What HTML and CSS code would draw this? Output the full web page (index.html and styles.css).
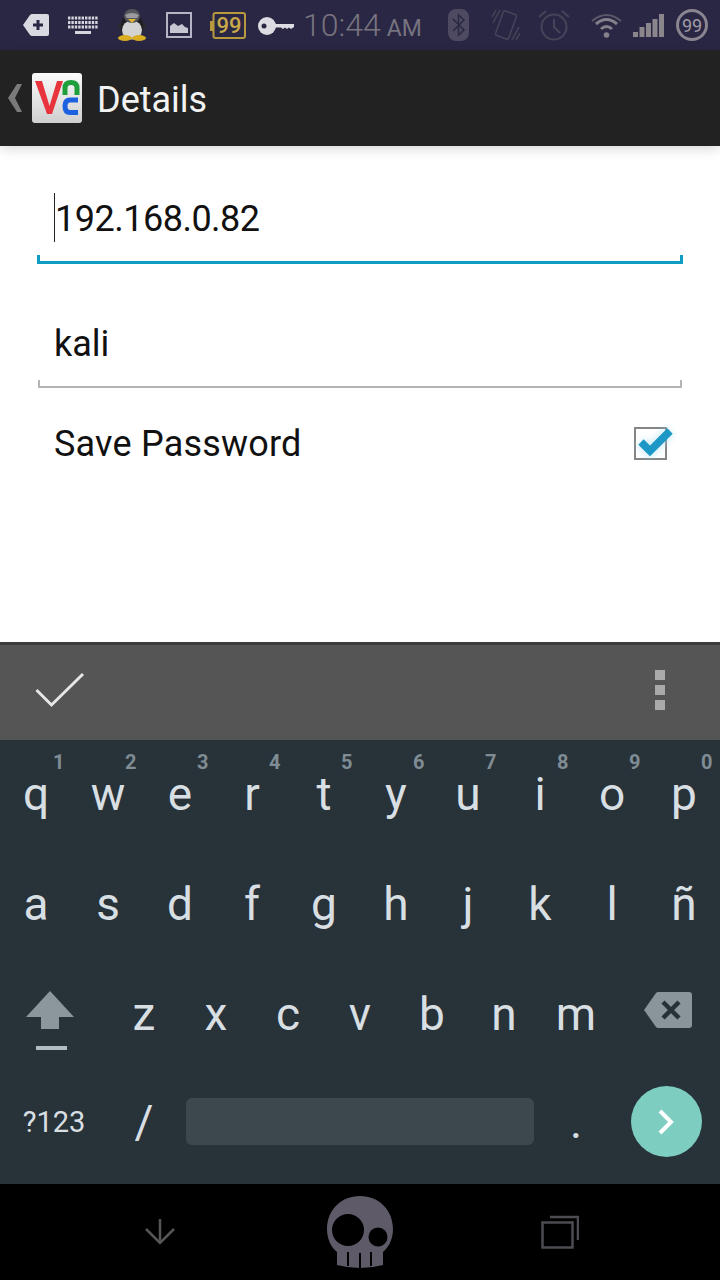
FILE: index.html
```html
<!DOCTYPE html>
<html lang="en">
<head>
    <meta charset="UTF-8">
    <meta name="viewport" content="width=device-width, initial-scale=1.0">
    <title>Details</title>
    <link rel="stylesheet" href="styles.css">
</head>
<body>
    <div class="screen">
        <!-- Status bar -->
        <div class="status-bar">
            <div class="status-left">
                <svg class="ic-tag" width="26" height="22" viewBox="0 0 26 22"><path d="M0 11 L7 1 Q8 0 9 0 H24 Q26 0 26 2 V20 Q26 22 24 22 H9 Q8 22 7 21 Z" fill="#d9d9e2"/><path d="M15 6 V16 M10 11 H20" stroke="#2a2744" stroke-width="3"/></svg>
                <svg class="ic-keys" width="30" height="20" viewBox="0 0 30 20"><g stroke="#d5d5dd" stroke-width="3" stroke-dasharray="2.4 1"><path d="M0 3 H30"/><path d="M0 7.5 H30"/><path d="M0 12 H30"/></g><path d="M7 17.5 H23" stroke="#d5d5dd" stroke-width="3"/></svg>
                <svg class="ic-penguin" width="30" height="32" viewBox="0 0 30 32"><path d="M6 24 L0 17 L7 12 Z M24 24 L30 17 L23 12 Z" fill="#2a2a30"/><ellipse cx="15" cy="17" rx="11" ry="13" fill="#1d1d22"/><ellipse cx="15" cy="21" rx="10" ry="9.5" fill="#d3d3d3"/><ellipse cx="15" cy="7" rx="8" ry="7" fill="#55555c"/><path d="M8 6 Q15 2 22 6 L20 9 H10 Z" fill="#9a9aa0"/><path d="M11 10 H19 L15 14 Z" fill="#e0b630"/><ellipse cx="8" cy="29" rx="7" ry="3" fill="#d9ae22"/><ellipse cx="22" cy="29" rx="7" ry="3" fill="#d9ae22"/></svg>
                <svg class="ic-image" width="26" height="26" viewBox="0 0 26 26"><rect x="1" y="1" width="24" height="24" fill="none" stroke="#b4b4c4" stroke-width="2"/><path d="M4 21 V14 L8 11 L12 14 L16 12 L19 15 L22 16 V21 Z" fill="#c6c6d0"/></svg>
                <svg class="ic-battery" width="36" height="27" viewBox="0 0 36 27"><rect x="0" y="9" width="3" height="10" fill="#b89a3e"/><rect x="3.500" y="1" width="31.500" height="25" rx="2" fill="none" stroke="#b89a3e" stroke-width="2"/><text x="19" y="21" text-anchor="middle" class="battery-text">99</text></svg>
                <svg class="ic-key" width="36" height="18" viewBox="0 0 36 18"><circle cx="9" cy="9" r="9" fill="#dcdce2"/><circle cx="6" cy="9" r="2.500" fill="#2a2744"/><path d="M16 7 H36 V10 L33 12 L31 10.500 L29 12 L27 10.500 L25 12 L23 10.500 H16 Z" fill="#dcdce2"/></svg>
                <div class="clock">10:44<span class="clock-ampm">AM</span></div>
            </div>
            <div class="status-right">
                <svg class="ic-bt" width="21" height="32" viewBox="0 0 21 32"><rect width="21" height="32" rx="8" fill="#4d4a62"/><path d="M5 10 L16 21 L10.500 26 V6 L16 11 L5 22" fill="none" stroke="#2a2744" stroke-width="1.500"/></svg>
                <svg class="ic-rotate" width="28" height="32" viewBox="0 0 28 32"><g fill="none" stroke="#474459" stroke-width="1.500"><rect x="7" y="3" width="14" height="26" rx="2" transform="rotate(20 14 16)"/><path d="M1 14 L8 1 M27 18 L20 31 M0 8 L4 1 M28 24 L24 31"/></g></svg>
                <svg class="ic-alarm" width="32" height="32" viewBox="0 0 32 32"><g fill="none" stroke="#474459" stroke-width="2"><circle cx="16" cy="18" r="12.500"/><path d="M16 10 V18 L22 24 M1 8 L8 2 M31 8 L24 2"/></g></svg>
                <svg class="ic-wifi" width="31" height="25" viewBox="0 0 31 25"><g fill="none" stroke="#85818b"><path d="M1 8 Q15.500 -4 30 8" stroke-width="2" stroke="#5b586a"/><path d="M5 11 Q15.500 2 26 11" stroke-width="3"/><path d="M10 16 Q15.500 11 21 16" stroke-width="3"/></g><circle cx="15.500" cy="22" r="2.800" fill="#85818b"/></svg>
                <svg class="ic-signal" width="31" height="23" viewBox="0 0 31 23"><g fill="#8a868c"><rect x="0" y="18" width="5" height="5"/><rect x="6.500" y="13" width="5" height="10"/><rect x="13" y="9" width="5" height="14"/><rect x="19.500" y="5" width="5" height="18"/><rect x="26" y="0" width="5" height="23"/></g></svg>
                <svg class="ic-level" width="32" height="32" viewBox="0 0 32 32"><circle cx="16" cy="16" r="14.500" fill="none" stroke="#8a8590" stroke-width="3"/><text x="16" y="22.500" text-anchor="middle" class="level-text">99</text></svg>
            </div>
        </div>

        <!-- Action bar -->
        <div class="action-bar">
            <svg class="ic-back" width="14" height="28" viewBox="0 0 14 28"><path d="M9 0 H14 L7 14 L14 28 H9 L0 14 Z" fill="#7a7a7a"/></svg>
            <svg class="app-logo" width="50" height="50" viewBox="0 0 50 50">
                <defs><linearGradient id="logo-bg" x1="0" y1="0" x2="0" y2="1"><stop offset="0" stop-color="#fafafa"/><stop offset="1" stop-color="#cfcfcf"/></linearGradient></defs>
                <rect width="50" height="50" rx="3" fill="url(#logo-bg)"/>
                <path d="M3 8 H10 L17.500 33 L25 8 H31 L20 41 H15 Z" fill="#e8343c"/>
                <path d="M33 22 V15 Q33 9.500 39 9.500 Q45 9.500 45 15 V22" fill="none" stroke="#1f9e3c" stroke-width="5"/>
                <path d="M46 27 H38 Q33 27 33 33 Q33 39.500 38 39.500 H46" fill="none" stroke="#1c62e0" stroke-width="5"/>
            </svg>
            <div class="action-title">Details</div>
        </div>

        <!-- Form -->
        <div class="content">
            <div class="field field-active">
                <div class="field-text field-digits"><span class="caret"></span>192.168.0.82</div>
                <div class="field-line"></div>
            </div>
            <div class="field">
                <div class="field-text">kali</div>
                <div class="field-line"></div>
            </div>
            <div class="check-row">
                <span class="check-label">Save Password</span>
                <svg class="check-box" width="40" height="38" viewBox="0 0 40 38">
                    <rect x="1" y="6" width="31" height="31" fill="none" stroke="#858585" stroke-width="2"/>
                    <path class="check-glow" d="M7 20 L16 29 L36 9" fill="none" stroke="#9fdcf2" stroke-width="11"/>
                    <path d="M7 20 L16 29 L36 9" fill="none" stroke="#1c97c6" stroke-width="7.500"/>
                </svg>
            </div>
        </div>

        <!-- Suggestions strip -->
        <div class="suggest-bar">
            <svg width="50" height="36" viewBox="0 0 50 36"><path d="M1.500 18 L16.500 33 L48 2" fill="none" stroke="#e6e6e6" stroke-width="3"/></svg>
            <div class="menu-dots"><span></span><span></span><span></span></div>
        </div>

        <!-- Keyboard -->
        <div class="keyboard">
            <div class="kb-row">
                <div class="key">q<span class="hint">1</span></div>
                <div class="key">w<span class="hint">2</span></div>
                <div class="key">e<span class="hint">3</span></div>
                <div class="key">r<span class="hint">4</span></div>
                <div class="key">t<span class="hint">5</span></div>
                <div class="key">y<span class="hint">6</span></div>
                <div class="key">u<span class="hint">7</span></div>
                <div class="key">i<span class="hint">8</span></div>
                <div class="key">o<span class="hint">9</span></div>
                <div class="key">p<span class="hint">0</span></div>
            </div>
            <div class="kb-row">
                <div class="key">a</div>
                <div class="key">s</div>
                <div class="key">d</div>
                <div class="key">f</div>
                <div class="key">g</div>
                <div class="key">h</div>
                <div class="key">j</div>
                <div class="key">k</div>
                <div class="key">l</div>
                <div class="key">ñ</div>
            </div>
            <div class="kb-row">
                <div class="key key-wide">
                    <svg class="ic-shift" width="48" height="60" viewBox="0 0 48 60"><path d="M24 0 L48 26 H33 V38 H15 V26 H0 Z" fill="#8b979b"/><rect x="10" y="55" width="31" height="4" fill="#b0bcc0"/></svg>
                </div>
                <div class="key">z</div>
                <div class="key">x</div>
                <div class="key">c</div>
                <div class="key">v</div>
                <div class="key">b</div>
                <div class="key">n</div>
                <div class="key">m</div>
                <div class="key key-wide">
                    <svg class="ic-del" width="48" height="36" viewBox="0 0 48 36"><path d="M0 18 L12 1 Q13 0 14 0 H45 Q48 0 48 3 V33 Q48 36 45 36 H14 Q13 36 12 35 Z" fill="#89959a"/><path d="M19 10 L35 26 M35 10 L19 26" stroke="#263238" stroke-width="4.500"/></svg>
                </div>
            </div>
            <div class="kb-row kb-row-bottom">
                <div class="key key-wide key-sym">?123</div>
                <div class="key">/</div>
                <div class="key-space"><div class="space-bar"></div></div>
                <div class="key">.</div>
                <div class="key key-wide">
                    <div class="enter-btn"><svg width="16" height="26" viewBox="0 0 16 26"><path d="M2 2 L13 13 L2 24" fill="none" stroke="#fff" stroke-width="4"/></svg></div>
                </div>
            </div>
        </div>

        <!-- Nav bar -->
        <div class="nav-bar">
            <svg width="30" height="26" viewBox="0 0 30 26"><path d="M15 0 V24 M1 10 L15 24 L29 10" fill="none" stroke="#555558" stroke-width="2.500"/></svg>
            <svg width="66" height="72" viewBox="0 0 66 72">
                <path d="M33 0 C52 0 66 14 66 33 C66 44 61 52 56 56 V69 Q45 72 33 72 Q21 72 10 69 V56 C4 51 0 43 0 33 C0 14 14 0 33 0 Z" fill="#5f5a68"/>
                <circle cx="21" cy="34" r="16" fill="#000"/>
                <circle cx="51" cy="41" r="9.500" fill="#000"/>
                <path d="M21 56 V70 M33 57 V72 M44 56 V70" stroke="#000" stroke-width="2"/>
            </svg>
            <svg width="38" height="34" viewBox="0 0 38 34"><g fill="none" stroke="#4c4c52" stroke-width="2.500"><rect x="1.500" y="7.500" width="30" height="25"/><path d="M9 2 H37 V25"/></g></svg>
        </div>
    </div>
</body>
</html>
```

FILE: styles.css
```css
* {
    box-sizing: border-box;
}

body {
    margin: 0;
    font-family: Roboto, "Liberation Sans", sans-serif;
}

svg {
    display: block;
    flex: none;
}

.screen {
    width: 720px;
    height: 1280px;
    display: flex;
    flex-direction: column;
    overflow: hidden;
    background: #fff;
}

/* Status bar */
.status-bar {
    height: 50px;
    padding: 0 12px 0 23px;
    display: flex;
    align-items: center;
    justify-content: space-between;
    background: #2a2744;
}

.status-left,
.status-right {
    display: flex;
    align-items: center;
}

.status-left {
    gap: 19px;
}

.status-right {
    gap: 18px;
}

.ic-battery {
    margin-left: -1px;
}

.ic-key {
    margin-left: -7px;
    margin-top: 2px;
}

.clock {
    margin-left: -10px;
    font-size: 32px;
    font-weight: 300;
    color: #77737f;
    white-space: nowrap;
}

.clock-ampm {
    margin-left: 6px;
    font-size: 23px;
    font-weight: 400;
}

.ic-bt {
    margin-right: 5px;
}

.ic-wifi {
    margin-left: 3px;
}

.ic-signal {
    margin-left: -7px;
}

.ic-level {
    margin-left: -6px;
}

.battery-text {
    font-family: Roboto, sans-serif;
    font-size: 22px;
    font-weight: 500;
    fill: #c9a94a;
}

.level-text {
    font-family: Roboto, sans-serif;
    font-size: 18px;
    fill: #a09ca6;
}

/* Action bar */
.action-bar {
    position: relative;
    height: 96px;
    padding-left: 8px;
    display: flex;
    align-items: center;
    background: #222;
    box-shadow: 0 2px 12px rgba(0, 0, 0, 0.18);
}

.app-logo {
    margin-left: 10px;
}

.action-title {
    margin: 4px 0 0 15px;
    font-size: 36px;
    color: #f2f2f2;
}

/* Form */
.content {
    flex: 1;
    padding: 48px 37px 0;
}

.field + .field {
    margin-top: 55px;
}

.field-text {
    height: 48px;
    padding: 2px 0 0 17px;
    display: flex;
    align-items: center;
    font-size: 36px;
    color: #111;
}

.field-digits {
    letter-spacing: -0.5px;
}

.caret {
    width: 1px;
    height: 49px;
    margin-top: -4px;
    background: #222;
}

.field-line {
    height: 8px;
    margin: 13px 1px 0;
    border: solid #b3b3b3;
    border-width: 0 2px 2px;
}

.field-active .field-line {
    height: 9px;
    margin: 13px 0 0;
    border-color: #0f9cc3;
    border-width: 0 3px 3px;
}

.check-row {
    height: 48px;
    margin-top: 31px;
    padding-left: 17px;
    display: flex;
    align-items: center;
    justify-content: space-between;
}

.check-label {
    margin-top: 2px;
    font-size: 36px;
    letter-spacing: 0.2px;
    color: #111;
}

.check-box {
    margin-right: 9px;
    margin-top: -4px;
    overflow: visible;
}

.check-glow {
    opacity: 0.5;
    filter: blur(3px);
}

/* Suggestions */
.suggest-bar {
    height: 98px;
    padding: 0 55px 5px 35px;
    display: flex;
    align-items: center;
    justify-content: space-between;
    background: #555;
    border-top: 3px solid #3c3c3c;
}

.menu-dots {
    display: flex;
    flex-direction: column;
    gap: 5px;
}

.menu-dots span {
    width: 10px;
    height: 10px;
    background: #aaa;
}

/* Keyboard */
.keyboard {
    height: 444px;
    background: #283239;
}

.kb-row {
    height: 110px;
    display: flex;
}

.key {
    position: relative;
    width: 72px;
    padding-bottom: 3px;
    display: flex;
    align-items: center;
    justify-content: center;
    font-size: 46px;
    color: #d8dfe3;
}

.kb-row-bottom .key {
    padding-bottom: 7px;
}

.key-wide {
    width: 108px;
}

.key-sym {
    font-size: 29px;
}

.hint {
    position: absolute;
    top: 10px;
    left: 53px;
    font-size: 20px;
    font-weight: 700;
    color: #7f8c94;
}

.ic-shift {
    margin: 15px 8px 0 0;
}

.ic-del {
    margin: -7px 0 0 4px;
}

.key-space {
    width: 360px;
    padding: 0 6px 8px;
    display: flex;
    align-items: center;
}

.space-bar {
    width: 100%;
    height: 47px;
    border-radius: 6px;
    background: #3d484e;
}

.enter-btn {
    width: 71px;
    height: 71px;
    display: flex;
    align-items: center;
    justify-content: center;
    border-radius: 50%;
    background: #7dcdc1;
}

/* Nav bar */
.nav-bar {
    height: 96px;
    display: grid;
    grid-template-columns: repeat(3, 200px);
    justify-content: center;
    justify-items: center;
    align-items: center;
    background: #000;
}
```
